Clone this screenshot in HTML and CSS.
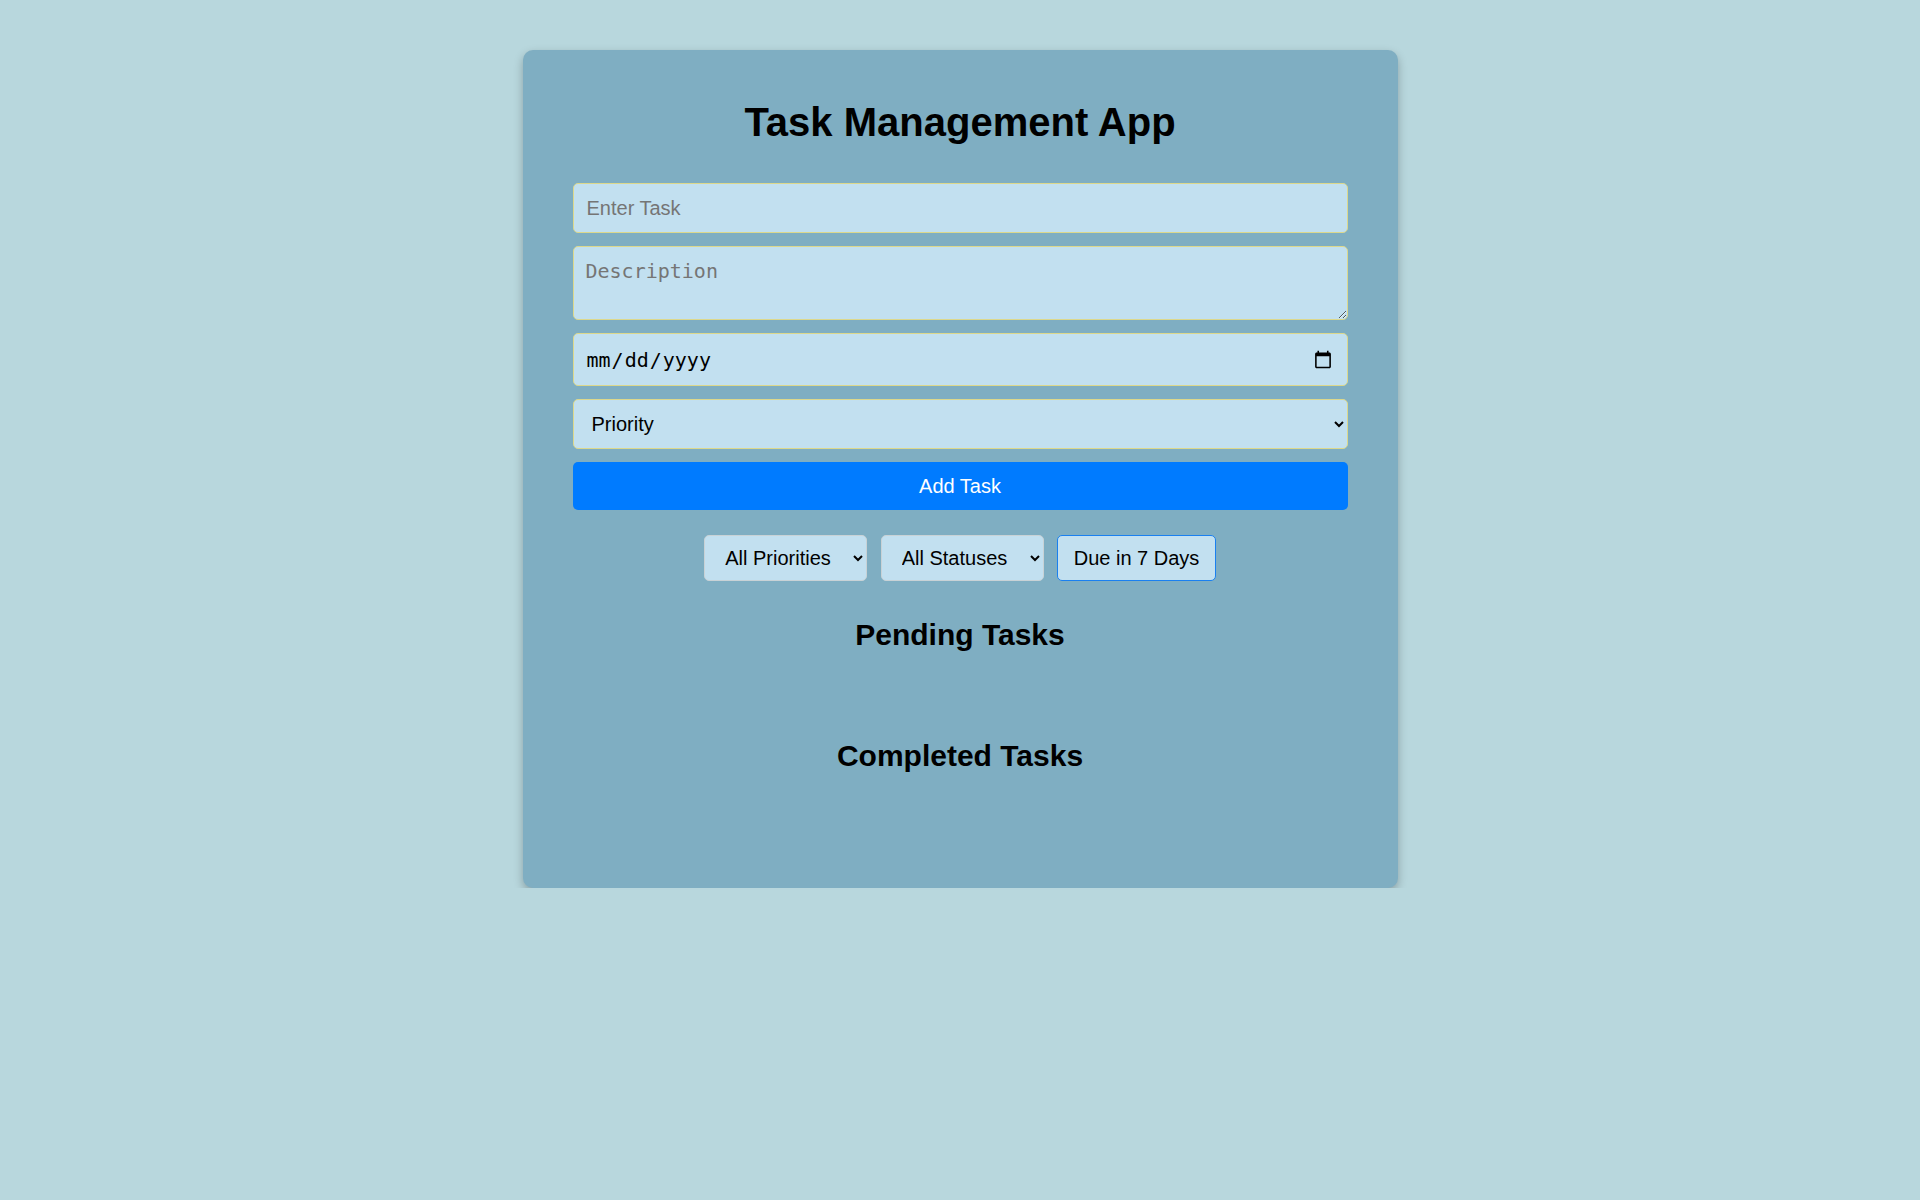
FILE: index.html
```html
<!DOCTYPE html>
<html lang="en">
<head>
<meta charset="UTF-8">
<title>Task Management App</title>
<link rel="stylesheet" href="styles.css">
</head>
<body>
<div class="app">
  <h1 class="title">Task Management App</h1>
  <form class="task-form" onsubmit="return false">
    <input class="field field-text" type="text" placeholder="Enter Task">
    <textarea class="field field-area" placeholder="Description"></textarea>
    <input class="field field-date" type="date">
    <select class="field field-select">
      <option>Priority</option>
      <option>High</option>
      <option>Medium</option>
      <option>Low</option>
    </select>
    <button class="add-btn" type="button">Add Task</button>
  </form>
  <div class="filters">
    <select class="filter-select">
      <option>All Priorities</option>
      <option>High</option>
      <option>Medium</option>
      <option>Low</option>
    </select>
    <select class="filter-select">
      <option>All Statuses</option>
      <option>Pending</option>
      <option>Completed</option>
    </select>
    <button class="filter-btn" type="button">Due in 7 Days</button>
  </div>
  <h2 class="section-title">Pending Tasks</h2>
  <ul class="task-list"></ul>
  <h2 class="section-title">Completed Tasks</h2>
  <ul class="task-list"></ul>
</div>
</body>
</html>
```
FILE: styles.css
```css
html, body {
  margin: 0;
  padding: 0;
}
body {
  background: #b8d7dd;
  font-family: "Liberation Sans", Arial, sans-serif;
  color: #000;
  padding-top: 50px;
}
.app {
  width: 775px;
  margin: 0 auto;
  padding: 49px 50px 65.5px;
  background: #7faec2;
  border-radius: 10px;
  box-shadow: 0 4px 10px rgba(0, 0, 0, 0.26);
}
.title {
  margin: 0 0 38px;
  font-size: 40px;
  line-height: 46px;
  font-weight: bold;
  text-align: center;
}
.task-form {
  display: flex;
  flex-direction: column;
  gap: 13px;
}
.field {
  box-sizing: border-box;
  width: 100%;
  margin: 0;
  padding: 12px 12px 12px 13px;
  background: #c2e0f0;
  border: 1px solid #dcd88c;
  border-radius: 5px;
  color: #000;
  font-family: "Liberation Sans", Arial, sans-serif;
  font-size: 20px;
}
.field-text {
  height: 50px;
}
.field-area {
  height: 74px;
  padding-left: 12px;
  font-family: "DejaVu Sans Mono", monospace;
  font-size: 20px;
  resize: vertical;
  display: block;
}
.field-date {
  height: 53px;
  padding-left: 12px;
  font-family: "DejaVu Sans Mono", monospace;
  font-size: 20px;
}
.field-select {
  height: 50px;
  padding-left: 14px;
}
.field::placeholder {
  color: #757575;
}
.add-btn {
  height: 48px;
  margin: 0;
  border: none;
  border-radius: 5px;
  background: #007bff;
  color: #fff;
  font-family: "Liberation Sans", Arial, sans-serif;
  font-size: 20px;
  cursor: pointer;
}
.filters {
  display: flex;
  justify-content: center;
  gap: 13.5px;
  margin-top: 25px;
}
.filter-select,
.filter-btn {
  box-sizing: border-box;
  height: 46px;
  margin: 0;
  padding: 10px 19px 10px 16px;
  background: #c2e0f0;
  border: 1px solid #c8d2d6;
  border-radius: 5px;
  color: #000;
  font-family: "Liberation Sans", Arial, sans-serif;
  font-size: 20px;
}
.filter-btn {
  padding: 10px 15.5px;
  border-color: #1a80f0;
  cursor: pointer;
}
.section-title {
  margin: 37px 0 0;
  font-size: 30px;
  line-height: 34px;
  font-weight: bold;
  text-align: center;
}
.task-list {
  list-style: none;
  margin: 0;
  padding: 0;
  min-height: 49.5px;
}
```
